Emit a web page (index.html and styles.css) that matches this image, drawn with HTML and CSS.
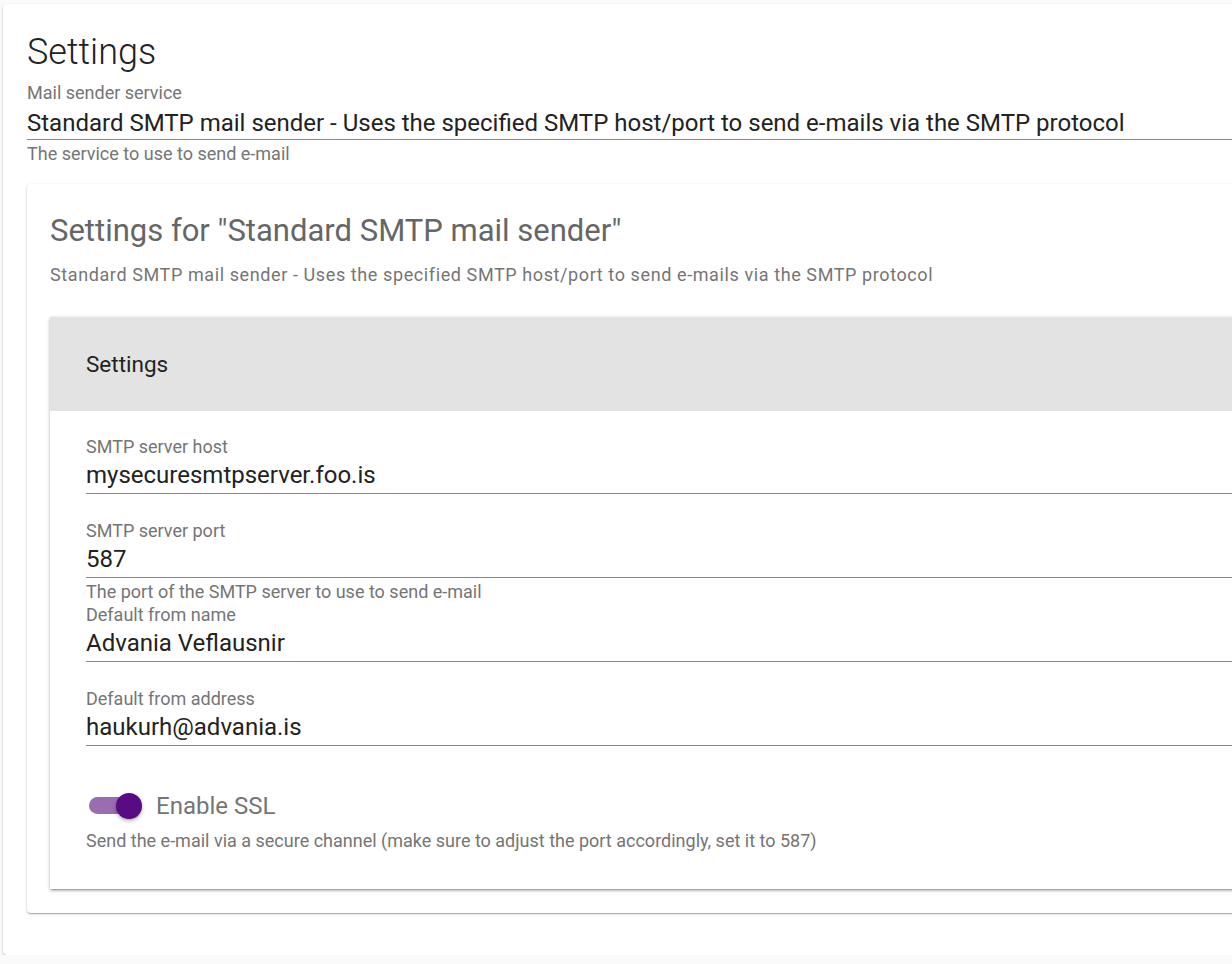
FILE: index.html
```html
<!DOCTYPE html>
<html lang="en">
<head>
    <meta charset="UTF-8">
    <meta name="viewport" content="width=device-width, initial-scale=1.0">
    <title>Settings</title>
    <link rel="stylesheet" href="styles.css">
</head>
<body>
    <div class="page">
        <div class="card outer">
            <h1 class="page-title">Settings</h1>

            <div class="field">
                <label class="field-label">Mail sender service</label>
                <div class="field-value select">Standard SMTP mail sender - Uses the specified SMTP host/port to send e-mails via the SMTP protocol</div>
                <div class="helper">The service to use to send e-mail</div>
            </div>

            <div class="card inner">
                <h2 class="section-title">Settings for "Standard SMTP mail sender"</h2>
                <p class="section-desc">Standard SMTP mail sender - Uses the specified SMTP host/port to send e-mails via the SMTP protocol</p>

                <div class="panel">
                    <div class="panel-header">Settings</div>
                    <div class="panel-body">
                        <div class="field">
                            <label class="field-label">SMTP server host</label>
                            <div class="field-value">mysecuresmtpserver.foo.is</div>
                        </div>

                        <div class="field has-helper">
                            <label class="field-label">SMTP server port</label>
                            <div class="field-value">587</div>
                            <div class="helper">The port of the SMTP server to use to send e-mail</div>
                        </div>

                        <div class="field">
                            <label class="field-label">Default from name</label>
                            <div class="field-value">Advania Veflausnir</div>
                        </div>

                        <div class="field">
                            <label class="field-label">Default from address</label>
                            <div class="field-value">haukurh@advania.is</div>
                        </div>

                        <div class="switch-row">
                            <span class="switch">
                                <span class="switch-track"></span>
                                <span class="switch-thumb"></span>
                            </span>
                            <span class="switch-label">Enable SSL</span>
                        </div>
                        <div class="helper switch-helper">Send the e-mail via a secure channel (make sure to adjust the port accordingly, set it to 587)</div>
                    </div>
                </div>
            </div>
        </div>
    </div>
</body>
</html>
```

FILE: styles.css
```css
html, body {
    margin: 0;
    overflow: hidden;
}
body {
    font-family: Roboto, "Noto Sans", Arial, sans-serif;
    background: #fafafa;
    color: #212121;
}
.page {
    padding: 4px 0 0 3px;
    width: 1400px;
}
.card {
    background: #fff;
    border-radius: 4px;
    box-shadow: 0 1px 3px rgba(0,0,0,0.2), 0 1px 1px rgba(0,0,0,0.12), 0 2px 1px -1px rgba(0,0,0,0.1);
}
.outer {
    padding: 27px 0 42px 24px;
}
.page-title {
    margin: 0;
    font-size: 36px;
    font-weight: 300;
    line-height: 42px;
    color: #222;
}
.field-label {
    display: block;
    font-size: 18px;
    line-height: 22px;
    color: #757575;
}
.outer > .field {
    margin-top: 9px;
}
.outer > .field .field-label {
    margin-bottom: 4px;
}
.field-value {
    font-size: 24px;
    line-height: 30px;
    padding-bottom: 3px;
    border-bottom: 1px solid #8a8a8a;
    color: #222;
    white-space: nowrap;
}
.field-value.select {
    padding-bottom: 1px;
}
.helper {
    margin-top: 3px;
    font-size: 18px;
    line-height: 22px;
    color: #757575;
}
.inner {
    margin-top: 19px;
    padding: 29px 0 24px 23px;
}
.section-title {
    margin: 0;
    font-size: 31px;
    font-weight: 400;
    line-height: 36px;
    color: #666;
}
.section-desc {
    margin: 15px 0 31px;
    font-size: 18px;
    line-height: 22px;
    letter-spacing: 0.6px;
    color: #757575;
}
.panel {
    background: #fff;
    box-shadow: 0 1px 4px rgba(0,0,0,0.22), 0 2px 2px rgba(0,0,0,0.14), 0 3px 1px -2px rgba(0,0,0,0.12);
}
.panel-header {
    height: 94px;
    display: flex;
    align-items: center;
    padding-left: 36px;
    background: #e3e3e3;
    font-size: 22.5px;
    color: #222;
}
.panel-body {
    padding: 25px 0 37px 36px;
}
.panel-body .field {
    margin-bottom: 26px;
}
.panel-body .field .field-label {
    margin-bottom: 2px;
}
.panel-body .field.has-helper {
    margin-bottom: 1px;
}
.switch-row {
    display: flex;
    align-items: center;
    height: 40px;
    margin-top: 40px;
}
.switch {
    position: relative;
    width: 56px;
    height: 26px;
    margin-left: 3px;
}
.switch-track {
    position: absolute;
    left: 0;
    top: 4px;
    width: 50px;
    height: 17px;
    border-radius: 9px;
    background: #9a6db1;
}
.switch-thumb {
    position: absolute;
    right: 3px;
    top: 0;
    width: 26px;
    height: 26px;
    border-radius: 50%;
    background: #580b82;
    box-shadow: 0 2px 4px rgba(0,0,0,0.25), 0 1px 2px rgba(0,0,0,0.15);
}
.switch-label {
    margin-left: 11px;
    font-size: 24px;
    color: #757575;
}
.panel-body .switch-helper {
    margin-top: 4px;
}
```
